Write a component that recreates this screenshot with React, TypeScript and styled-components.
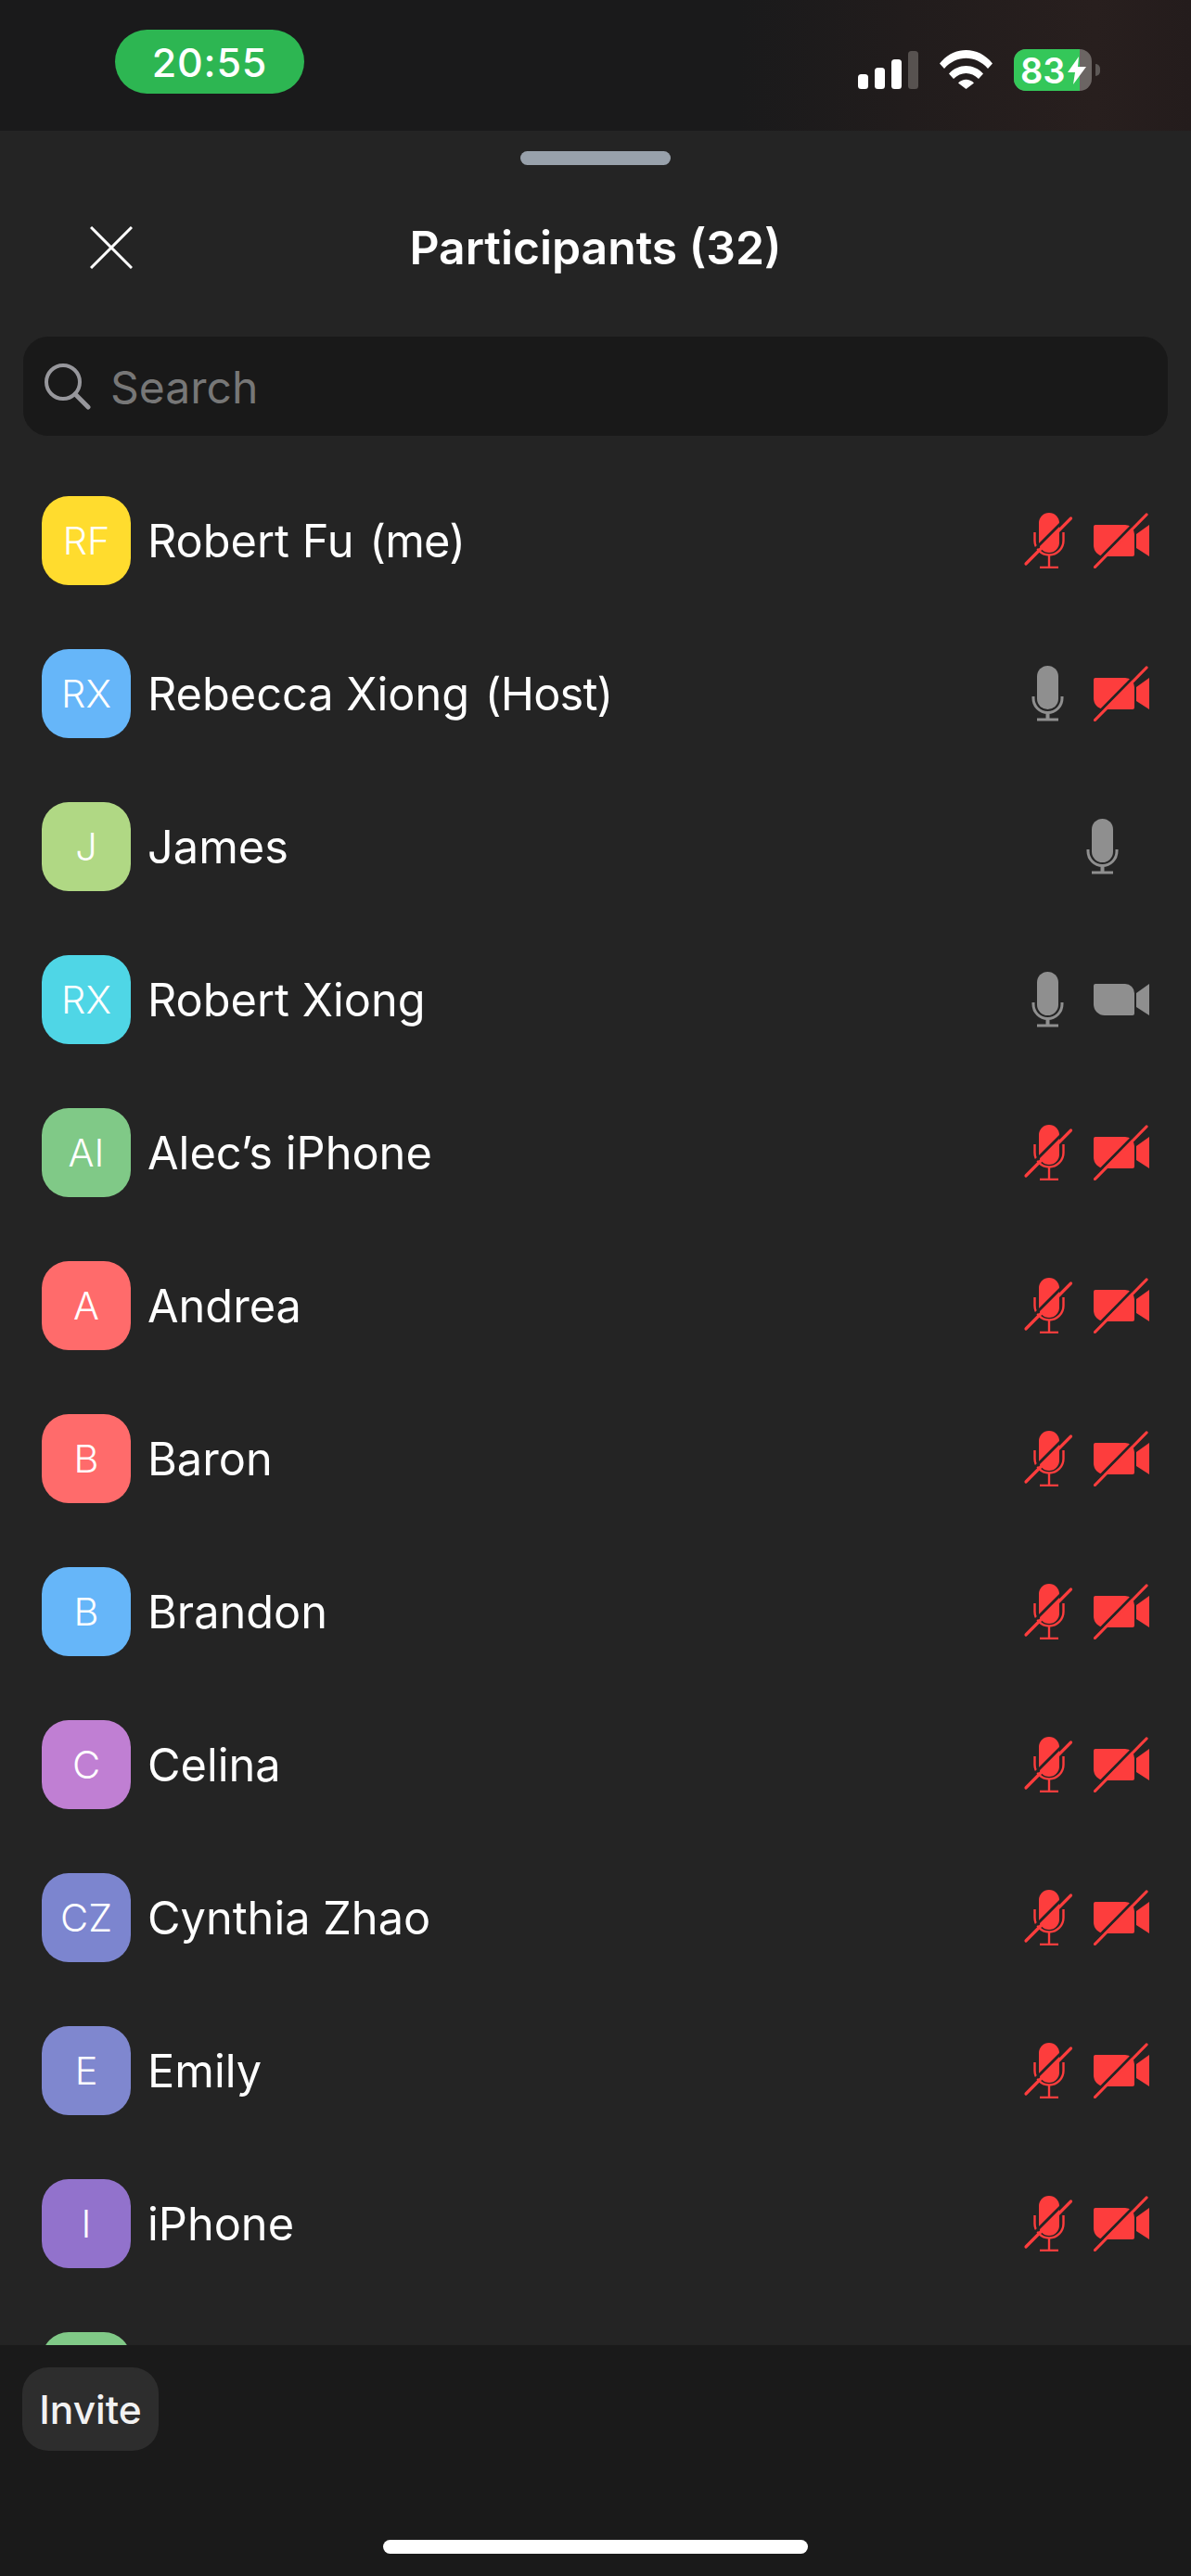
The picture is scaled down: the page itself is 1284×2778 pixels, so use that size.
import React from "react";
import styled, { createGlobalStyle } from "styled-components";

const Global = createGlobalStyle`
  html, body { margin: 0; padding: 0; background: #242424; }
  * { box-sizing: border-box; }
`;

const Page = styled.div`
  width: 1284px;
  height: 2778px;
  display: flex;
  flex-direction: column;
  overflow: hidden;
  background: #242424;
  color: #fff;
  font-family: Inter, "Liberation Sans", sans-serif;
`;

const StatusBar = styled.header`
  height: 141px;
  flex: none;
  display: flex;
  align-items: flex-start;
  justify-content: space-between;
  padding: 32px 98px 0 124px;
  background: linear-gradient(90deg, #1a1a1b 62%, #211c1c 76%, #281f1e 92%, #241c1c 100%);
`;

const TimePill = styled.div`
  width: 204px;
  height: 69px;
  border-radius: 35px;
  background: #2db652;
  display: flex;
  align-items: center;
  justify-content: center;
  font-size: 43px;
  font-weight: 500;
  letter-spacing: 0.8px;
`;

const StatusIcons = styled.div`
  display: flex;
  align-items: flex-end;
  gap: 23px;
  margin-top: 21px;
  height: 45px;
  svg { margin-bottom: 2px; display: block; }
`;

const BatteryWrap = styled.div`
  display: flex;
  align-items: center;
  gap: 4px;
`;

const BatteryBody = styled.div`
  position: relative;
  width: 84px;
  height: 45px;
  border-radius: 13px;
  overflow: hidden;
  background: #6b6563;
`;

const BatteryFill = styled.div`
  height: 100%;
  background: #34c759;
`;

const BatteryLabel = styled.div`
  position: absolute;
  inset: 0;
  display: flex;
  align-items: center;
  padding-left: 7px;
  gap: 2px;
  font-size: 38px;
  font-weight: 600;
  line-height: 1;
  svg { margin: 0; }
`;

const BatteryNub = styled.div`
  width: 5px;
  height: 13px;
  border-radius: 0 5px 5px 0;
  background: #5d5856;
`;

const Handle = styled.div`
  width: 162px;
  height: 15px;
  flex: none;
  margin: 22px auto 0;
  border-radius: 8px;
  background: #98a1ab;
`;

const Header = styled.div`
  height: 180px;
  flex: none;
  margin-bottom: 5px;
  display: grid;
  grid-template-columns: 1fr auto 1fr;
  align-items: center;
  padding-left: 97px;
  padding-right: 97px;
`;

const CloseButton = styled.div`
  display: flex;
  align-items: center;
  margin-top: -3px;
  svg { display: block; }
`;

const Title = styled.h1`
  margin: 0;
  font-size: 49.8px;
  font-weight: 600;
  line-height: 1;
`;

const SearchBox = styled.div`
  height: 107px;
  flex: none;
  margin: 0 25px;
  border-radius: 27px;
  background: #191919;
  display: flex;
  align-items: center;
  padding-left: 23px;
  gap: 21px;
  color: #777777;
  font-size: 48px;
  svg { display: block; }
`;

const SearchText = styled.span`
  padding-top: 2px;
`;

const List = styled.div`
  flex: 1;
  min-height: 0;
  overflow: hidden;
  padding-top: 30px;
`;

const Row = styled.div`
  height: 165px;
  display: flex;
  align-items: center;
  padding: 35px 45px 34px 45px;
`;

const Avatar = styled.div<{ $bg: string }>`
  width: 96px;
  height: 96px;
  flex: none;
  border-radius: 29px;
  background: ${(p) => p.$bg};
  display: flex;
  align-items: center;
  justify-content: center;
  font-size: 41.5px;
  font-weight: 300;
`;

const Name = styled.div`
  flex: 1;
  margin-left: 18px;
  padding-top: 3px;
  font-size: 48.7px;
  font-weight: 400;
  line-height: 1;
  white-space: pre;
`;

const Suffix = styled.span`
  margin-left: 3px;
  letter-spacing: -0.8px;
`;

const Icons = styled.div<{ $solo?: boolean }>`
  display: flex;
  gap: 19px;
  margin-right: ${(p) => (p.$solo ? 20 : 0)}px;
  svg { display: block; }
`;

const Footer = styled.footer`
  height: 249px;
  flex: none;
  background: #1a1a1a;
  display: flex;
  flex-direction: column;
  padding: 24px 24px 0;
`;

const InviteButton = styled.div`
  width: 147px;
  height: 90px;
  border-radius: 28px;
  background: #2d2d2d;
  color: #f2f2f2;
  display: flex;
  align-items: center;
  justify-content: center;
  font-size: 42.5px;
  font-weight: 500;
`;

const HomeBar = styled.div`
  width: 458px;
  height: 15px;
  margin: 96px auto 0;
  border-radius: 8px;
  background: #fff;
`;

const RED = "#fd3d3d";
const GREY = "#8f8f8f";
const BG = "#242424";

const RedMic = () => (
  <svg width="60" height="60" viewBox="0 0 60 60" fill="none">
    <rect x="20" y="0" width="22" height="43" rx="11" fill={RED} />
    <path d="M15.5 21V30a15.5 15.5 0 0 0 31 0V21" stroke={RED} strokeWidth="2.4" />
    <path d="M31 46V59M21 59H41" stroke={RED} strokeWidth="2.4" />
    <path d="M2 53L51 4" stroke={BG} strokeWidth="3" />
    <path d="M6 55L54.5 6" stroke={RED} strokeWidth="3.2" strokeLinecap="round" />
  </svg>
);

const GreyMic = () => (
  <svg width="60" height="60" viewBox="0 0 60 60" fill="none">
    <rect x="18" y="0" width="23" height="47" rx="11.5" fill={GREY} />
    <path d="M14 33V35a15.500 15.500 0 0 0 31 0V33" stroke={GREY} strokeWidth="3" />
    <path d="M29.500 50V58" stroke={GREY} strokeWidth="4" />
    <path d="M18 58H41" stroke={GREY} strokeWidth="3" />
  </svg>
);

const videoBody = "M2 13H34a10 10 0 0 1 10 10V45a2 2 0 0 1-2 2H12A12 12 0 0 1 0 35V15a2 2 0 0 1 2-2Z";
const videoLens = "M60 13V47L46 38V23Z";

const RedVideo = () => (
  <svg width="60" height="60" viewBox="0 0 60 60" fill="none">
    <path d={videoBody} fill={RED} />
    <path d={videoLens} fill={RED} />
    <path d="M0 56L56 -1" stroke={BG} strokeWidth="3" />
    <path d="M1.500 58.500L57 2" stroke={RED} strokeWidth="3.2" strokeLinecap="round" />
  </svg>
);

const GreyVideo = () => (
  <svg width="60" height="60" viewBox="0 0 60 60" fill="none">
    <path d={videoBody} fill={GREY} />
    <path d={videoLens} fill={GREY} />
  </svg>
);

type Person = {
  initials: string;
  name: string;
  suffix?: string;
  color: string;
  mic: "red" | "grey";
  video: "red" | "grey" | "none";
};

const people: Person[] = [
  { initials: "RF", name: "Robert Fu ", suffix: "(me)", color: "#ffdc2e", mic: "red", video: "red" },
  { initials: "RX", name: "Rebecca Xiong ", suffix: "(Host)", color: "#66b6f9", mic: "grey", video: "red" },
  { initials: "J", name: "James", color: "#b0d884", mic: "grey", video: "none" },
  { initials: "RX", name: "Robert Xiong", color: "#4fd6e6", mic: "grey", video: "grey" },
  { initials: "AI", name: "Alec\u2019s iPhone", color: "#80c987", mic: "red", video: "red" },
  { initials: "A", name: "Andrea", color: "#ff6b6b", mic: "red", video: "red" },
  { initials: "B", name: "Baron", color: "#ff6b6b", mic: "red", video: "red" },
  { initials: "B", name: "Brandon", color: "#66b6f9", mic: "red", video: "red" },
  { initials: "C", name: "Celina", color: "#c07fd3", mic: "red", video: "red" },
  { initials: "CZ", name: "Cynthia Zhao", color: "#7c85cf", mic: "red", video: "red" },
  { initials: "E", name: "Emily", color: "#7f87cf", mic: "red", video: "red" },
  { initials: "I", name: "iPhone", color: "#9272cc", mic: "red", video: "red" },
  { initials: "", name: "", color: "#80c987", mic: "red", video: "none" },
];

export default function App() {
  return (
    <Page>
      <Global />
      <StatusBar>
        <TimePill>20:55</TimePill>
        <StatusIcons>
          <svg width="65" height="41" viewBox="0 0 65 41">
            <rect x="0" y="25" width="11" height="16" rx="3.500" fill="#fff" />
            <rect x="18" y="18" width="11" height="23" rx="3.500" fill="#fff" />
            <rect x="36" y="9" width="11" height="32" rx="3.500" fill="#fff" />
            <rect x="54" y="0" width="11" height="41" rx="3.500" fill="#575250" />
          </svg>
          <svg width="57" height="42" viewBox="0 0 57 42" fill="#fff">
            <path d="M0 14.500C15 -4.800 42 -4.800 57 14.500L52 20C39 5 18 5 5 20Z" />
            <path d="M10 25.500C20 14 37 14 47 25.500L42 31C34 23 23 23 15 31Z" />
            <path d="M20 35.500C25 30.500 32 30.500 37 35.500L28.500 42Z" />
          </svg>
          <BatteryWrap>
            <BatteryBody>
              <BatteryFill style={{ width: "71px" }} />
              <BatteryLabel>
                83
                <svg width="20" height="30" viewBox="0 0 20 30" fill="#fff">
                  <path d="M12 0L0 17H8L6 30L20 11H11Z" />
                </svg>
              </BatteryLabel>
            </BatteryBody>
            <BatteryNub />
          </BatteryWrap>
        </StatusIcons>
      </StatusBar>

      <Handle />
      <Header>
        <CloseButton>
          <svg width="46" height="46" viewBox="0 0 46 46" fill="none">
            <path d="M1 1L45 45M45 1L1 45" stroke="#fff" strokeWidth="3" />
          </svg>
        </CloseButton>
        <Title>Participants (32)</Title>
        <span />
      </Header>

      <SearchBox>
        <svg width="50" height="50" viewBox="0 0 50 50" fill="none">
          <circle cx="20" cy="20" r="18" stroke="#97979c" strokeWidth="4" />
          <path d="M33 33L47 47" stroke="#97979c" strokeWidth="5" strokeLinecap="round" />
        </svg>
        <SearchText>Search</SearchText>
      </SearchBox>

      <List>
        {people.map((p, i) => (
          <Row key={i}>
            <Avatar $bg={p.color}>{p.initials}</Avatar>
            <Name>
              {p.name}
              {p.suffix && <Suffix>{p.suffix}</Suffix>}
            </Name>
            {p.name && (
              <Icons $solo={p.video === "none"}>
                {p.mic === "red" ? <RedMic /> : <GreyMic />}
                {p.video === "red" && <RedVideo />}
                {p.video === "grey" && <GreyVideo />}
              </Icons>
            )}
          </Row>
        ))}
      </List>

      <Footer>
        <InviteButton>Invite</InviteButton>
        <HomeBar />
      </Footer>
    </Page>
  );
}
